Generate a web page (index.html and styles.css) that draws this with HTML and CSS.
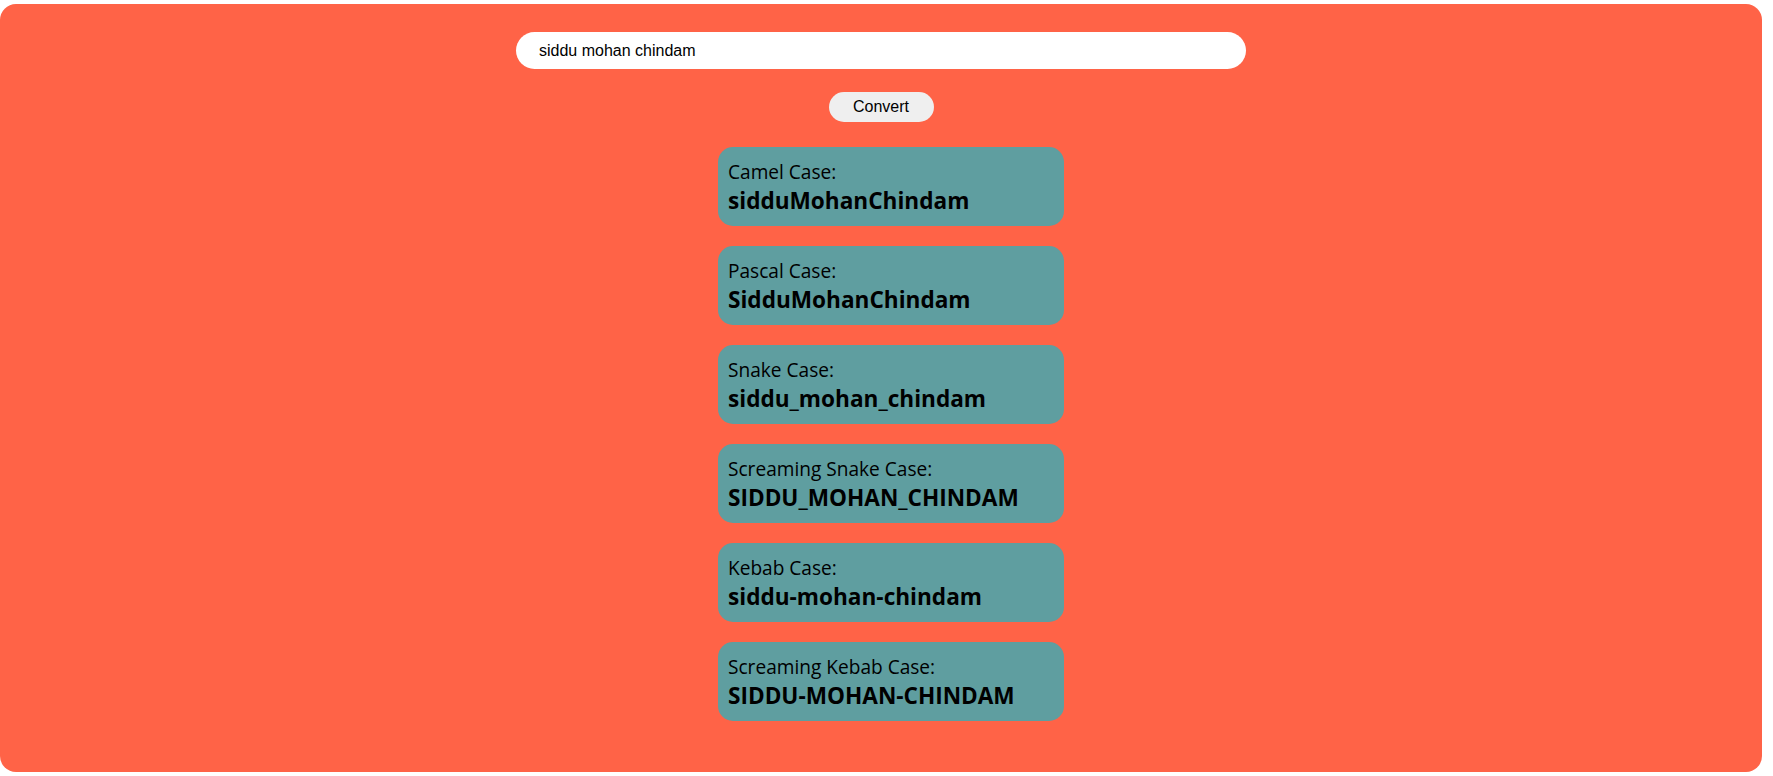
FILE: index.html
```html
<!DOCTYPE html>
<html lang="en">
<head>
<meta charset="utf-8">
<title>Case Converter</title>
<link rel="stylesheet" href="styles.css">
</head>
<body>
<div class="app">
  <input class="text-input" type="text" value="siddu mohan chindam">
  <button class="convert-btn">Convert</button>
  <div class="results">
    <div class="card"><div class="label">Camel Case:</div><div class="value">sidduMohanChindam</div></div>
    <div class="card"><div class="label">Pascal Case:</div><div class="value">SidduMohanChindam</div></div>
    <div class="card"><div class="label">Snake Case:</div><div class="value">siddu_mohan_chindam</div></div>
    <div class="card"><div class="label">Screaming Snake Case:</div><div class="value">SIDDU_MOHAN_CHINDAM</div></div>
    <div class="card"><div class="label">Kebab Case:</div><div class="value">siddu-mohan-chindam</div></div>
    <div class="card"><div class="label">Screaming Kebab Case:</div><div class="value">SIDDU-MOHAN-CHINDAM</div></div>
  </div>
</div>
</body>
</html>
```
FILE: styles.css
```css
html, body {
  margin: 0;
  padding: 0;
  background: #ffffff;
}
.app {
  box-sizing: border-box;
  margin: 4px 11px 4px 0;
  height: 768px;
  background: #ff6347;
  border-radius: 16px;
  display: flex;
  flex-direction: column;
  align-items: center;
  padding-top: 28px;
}
.text-input {
  box-sizing: border-box;
  width: 730px;
  height: 37px;
  border: none;
  outline: none;
  border-radius: 19px;
  background: #ffffff;
  padding: 0 23px;
  font-family: "Liberation Sans", Arial, sans-serif;
  font-size: 16px;
  color: #000;
}
.convert-btn {
  margin-top: 23px;
  box-sizing: border-box;
  width: 105px;
  height: 30px;
  border: none;
  border-radius: 15px;
  background: #efefef;
  font-family: "Liberation Sans", Arial, sans-serif;
  font-size: 16px;
  color: #000;
  padding: 0;
}
.results {
  margin-top: 25px;
  padding-left: 20px;
  display: flex;
  flex-direction: column;
  gap: 20px;
}
.card {
  box-sizing: border-box;
  width: 346px;
  height: 79px;
  background: #5f9ea0;
  border-radius: 15px;
  padding: 12px 10px 8px;
  font-family: "Open Sans", sans-serif;
  color: #000;
}
.label {
  font-size: 19.1px;
  line-height: 26px;
}
.value {
  margin-top: 1px;
  font-size: 22.6px;
  line-height: 30px;
  font-weight: 700;
}
```
